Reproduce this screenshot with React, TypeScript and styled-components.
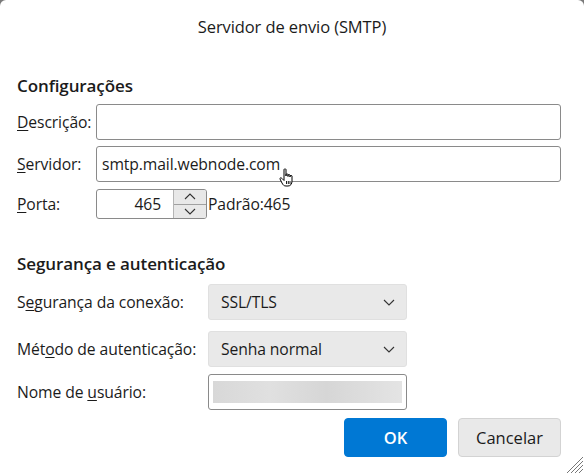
import React from "react";
import styled, { createGlobalStyle } from "styled-components";

const Global = createGlobalStyle`
  html, body { margin: 0; padding: 0; background: #7a7a7a; }
  body { font-family: "Segoe UI", "Open Sans", "Noto Sans", sans-serif; color: #1b1b1b; }
  * { box-sizing: border-box; }
`;

const Dialog = styled.div`
  position: relative;
  width: 584px;
  height: 474px;
  background: #ffffff;
  border-radius: 6px 6px 0 0;
  padding: 0 23px 0 17px;
  display: flex;
  flex-direction: column;
  font-size: 15.7px;
  letter-spacing: -0.1px;
`;

const Title = styled.div`
  height: 52px;
  display: flex;
  align-items: center;
  justify-content: center;
  font-size: 16.5px;
  margin-left: -17px;
  margin-right: -23px;
`;

const Heading = styled.div<{ $top: number }>`
  margin-top: ${(p) => p.$top}px;
  font-weight: 600;
  font-size: 17px;
  line-height: 20px;
`;

const Grid = styled.div<{ $label: number; $top: number }>`
  display: grid;
  grid-template-columns: ${(p) => p.$label}px 1fr;
  align-items: center;
  margin-top: ${(p) => p.$top}px;
`;

const Label = styled.label<{ $mt?: number }>`
  white-space: nowrap;
  margin-top: ${(p) => p.$mt ?? 0}px;
  u { text-decoration-thickness: 1px; text-underline-offset: 2px; }
`;

const Cell = styled.div<{ $mt?: number; $w?: number }>`
  margin-top: ${(p) => p.$mt ?? 0}px;
  width: ${(p) => (p.$w ? `${p.$w}px` : "auto")};
  display: flex;
  align-items: center;
`;

const TextBox = styled.div<{ $h: number }>`
  flex: 1;
  height: ${(p) => p.$h}px;
  border: 1px solid #8a8a8a;
  border-radius: 3px;
  background: #fff;
  display: flex;
  align-items: center;
  padding: 0 5px;
`;

const BlurBar = styled.div`
  flex: 1;
  height: 22px;
  margin: 0 -1px;
  background: linear-gradient(90deg, #d8d8d8, #e0e0e0 30%, #d6d6d6 60%, #e4e4e4);
  filter: blur(0.6px);
`;

const SpinBox = styled.div`
  display: flex;
  height: 30px;
  width: 111px;
  border: 1px solid #8a8a8a;
  border-radius: 3px;
  overflow: hidden;
`;

const SpinValue = styled.div`
  flex: 1;
  display: flex;
  align-items: center;
  justify-content: flex-end;
  padding-right: 12px;
`;

const SpinButtons = styled.div`
  width: 33px;
  display: flex;
  flex-direction: column;
  background: #e8e8e8;
  border-left: 1px solid #b5b5b5;
`;

const SpinBtn = styled.div<{ $top?: boolean }>`
  flex: 1;
  display: flex;
  align-items: center;
  justify-content: center;
  border-bottom: ${(p) => (p.$top ? "1px solid #a0a0a0" : "none")};
`;

const Hint = styled.span`
  margin-left: 1px;
`;

const Select = styled.div`
  flex: 1;
  height: 36px;
  background: #e9e9e9;
  border: 1px solid #e0e0e0;
  border-radius: 3px;
  display: flex;
  align-items: center;
  justify-content: space-between;
  padding: 0 11px 0 12px;
`;

const Buttons = styled.div`
  display: flex;
  justify-content: flex-end;
  gap: 11px;
  margin-top: 8px;
`;

const Button = styled.button<{ $primary?: boolean }>`
  width: 103px;
  height: 39px;
  border-radius: 4px;
  font-family: inherit;
  font-size: 16.5px;
  font-weight: ${(p) => (p.$primary ? 600 : 400)};
  color: ${(p) => (p.$primary ? "#ffffff" : "#1b1b1b")};
  background: ${(p) => (p.$primary ? "#0078d4" : "#e9e9e9")};
  border: 1px solid ${(p) => (p.$primary ? "#0078d4" : "#d3d3d3")};
`;

const Grip = styled.svg`
  position: absolute;
  right: 0;
  bottom: 0;
`;

const Cursor = styled.svg`
  position: absolute;
  left: 279px;
  top: 168px;
`;

const Chevron = ({ up }: { up?: boolean }) => (
  <svg width="12" height="7" viewBox="0 0 12 7">
    <path
      d={up ? "M1 6 L6 1 L11 6" : "M1 1 L6 6 L11 1"}
      fill="none"
      stroke="#333"
      strokeWidth="1.1"
    />
  </svg>
);

export default function App() {
  return (
    <>
      <Global />
      <Dialog>
        <Title>Servidor de envio (SMTP)</Title>
        <Heading $top={24}>Configurações</Heading>
        <Grid $label={79} $top={8}>
          <Label><u>D</u>escrição:</Label>
          <Cell>
            <TextBox $h={36} />
          </Cell>
          <Label $mt={6}><u>S</u>ervidor:</Label>
          <Cell $mt={6}>
            <TextBox $h={36}>smtp.mail.webnode.com</TextBox>
          </Cell>
          <Label $mt={7}><u>P</u>orta:</Label>
          <Cell $mt={7}>
            <SpinBox>
              <SpinValue>465</SpinValue>
              <SpinButtons>
                <SpinBtn $top><Chevron up /></SpinBtn>
                <SpinBtn><Chevron /></SpinBtn>
              </SpinButtons>
            </SpinBox>
            <Hint>Padrão:465</Hint>
          </Cell>
        </Grid>
        <Heading $top={35}>Segurança e autenticação</Heading>
        <Grid $label={191} $top={10}>
          <Label>S<u>e</u>gurança da conexão:</Label>
          <Cell $w={199}>
            <Select>
              <span>SSL/TLS</span>
              <Chevron />
            </Select>
          </Cell>
          <Label $mt={11}>Mét<u>o</u>do de autenticação:</Label>
          <Cell $mt={11} $w={199}>
            <Select>
              <span>Senha normal</span>
              <Chevron />
            </Select>
          </Cell>
          <Label $mt={7}>Nome de <u>u</u>suário:</Label>
          <Cell $mt={7} $w={199}>
            <TextBox $h={36}>
              <BlurBar />
            </TextBox>
          </Cell>
        </Grid>
        <Buttons>
          <Button $primary>OK</Button>
          <Button>Cancelar</Button>
        </Buttons>
        <Grip width="18" height="18" viewBox="0 0 18 18">
          <path d="M17 5 L5 17 M17 9 L9 17 M17 13 L13 17 M17 1 L1 17" stroke="#777" strokeWidth="1" />
        </Grip>
        <Cursor width="16" height="20" viewBox="0 0 16 20">
          <path
            d="M5 1.5 C5 0.7 7 0.7 7 1.5 L7 8 L7 6.5 C7 5.7 9 5.7 9 6.5 L9 8.5 L9 7.2 C9 6.4 11 6.4 11 7.2 L11 9 L11 8 C11 7.2 13 7.2 13 8 L13 13 C13 16 11.5 18 9 18 L7 18 C5 18 4 17 3 15 L1 11 C0.6 10 2 9.3 2.8 10.3 L5 12.5 Z"
            fill="#fff"
            stroke="#000"
            strokeWidth="1"
          />
          <path d="M7.5 13 L7.5 16 M9.3 13 L9.3 16 M11 13 L11 16" stroke="#000" strokeWidth="0.9" />
        </Cursor>
      </Dialog>
    </>
  );
}
